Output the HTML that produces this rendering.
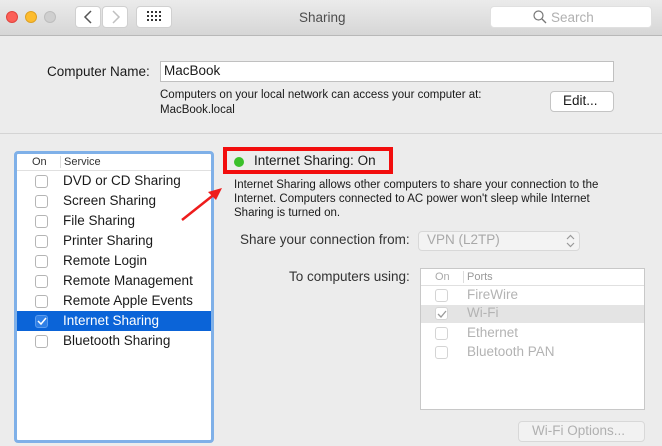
<!DOCTYPE html>
<html><head><style>
*{margin:0;padding:0;box-sizing:border-box}
body{width:662px;height:446px;background:#ececec;font-family:"Liberation Sans",sans-serif;font-size:13.5px;color:#1a1a1a;position:relative;overflow:hidden}
.a{position:absolute;white-space:nowrap}
.tb{left:0;top:0;width:662px;height:36px;background:linear-gradient(#ebebeb,#d6d6d6);border-bottom:1px solid #b8b8b8}
.dot{width:12px;height:12px;border-radius:6px;top:11px}
.btn{background:#fff;border-radius:4px;border:1px solid #d0d0d0}
.cb{width:13px;height:13px;border:1px solid #b5b5b5;border-radius:3px;background:#fff}
.row{left:0;width:194px;height:20px}
.row span{position:absolute;left:46px;top:2px}
.row .cb{position:absolute;left:18px;top:4px}
.g{color:#b3b3b3}
.g .cb{border-color:#d4d4d4}
.s{font-size:11.5px}
</style></head><body>
<div class="a tb"></div>
<div class="a dot" style="left:6px;background:#fc5f57;border:1px solid #e0443e"></div>
<div class="a dot" style="left:25px;background:#fdbc2e;border:1px solid #dea123"></div>
<div class="a dot" style="left:44px;background:#cfcfcf;border:1px solid #bdbdbd"></div>
<div class="a btn" style="left:75px;top:6px;width:26px;height:22px"></div>
<div class="a btn" style="left:102px;top:6px;width:26px;height:22px"></div>
<svg class="a" style="left:75px;top:6px" width="54" height="22"><path d="M16 5 L10 11 L16 17" stroke="#555" stroke-width="1.5" fill="none"/><path d="M38 5 L44 11 L38 17" stroke="#c0c0c0" stroke-width="1.5" fill="none"/></svg>
<div class="a btn" style="left:136px;top:6px;width:36px;height:22px"></div>
<svg class="a" style="left:147px;top:11px" width="14" height="12"><g fill="#333"><rect x="0" y="0" width="2" height="2"/><rect x="4" y="0" width="2" height="2"/><rect x="8" y="0" width="2" height="2"/><rect x="12" y="0" width="2" height="2"/><rect x="0" y="4" width="2" height="2"/><rect x="4" y="4" width="2" height="2"/><rect x="8" y="4" width="2" height="2"/><rect x="12" y="4" width="2" height="2"/><rect x="0" y="8" width="2" height="2"/><rect x="4" y="8" width="2" height="2"/><rect x="8" y="8" width="2" height="2"/><rect x="12" y="8" width="2" height="2"/></g></svg>
<div class="a" style="left:299px;top:10px;color:#4d4d4d">Sharing</div>
<div class="a btn" style="left:490px;top:6px;width:162px;height:22px;border-color:#e0e0e0"></div>
<svg class="a" style="left:533px;top:10px" width="14" height="14"><circle cx="5.5" cy="5.5" r="4.5" stroke="#777" stroke-width="1.2" fill="none"/><path d="M9 9 L13 13" stroke="#777" stroke-width="1.3"/></svg>
<div class="a" style="left:551px;top:10px;color:#b0b0b0">Search</div>

<div class="a" style="left:47px;top:64px">Computer Name:</div>
<div class="a" style="left:160px;top:61px;width:454px;height:21px;background:#fff;border:1px solid #c0c0c0"></div>
<div class="a" style="left:164px;top:63px">MacBook</div>
<div class="a s" style="left:160px;top:88px;line-height:15px">Computers on your local network can access your computer at:<br>MacBook.local</div>
<div class="a btn" style="left:550px;top:91px;width:64px;height:21px;border-color:#c4c4c4"></div>
<div class="a" style="left:563px;top:93px">Edit...</div>
<div class="a" style="left:0;top:133px;width:662px;height:1px;background:#d4d4d4"></div>

<div class="a" style="left:14px;top:151px;width:200px;height:292px;border:3px solid #7fb0e8;border-radius:4px;background:#fff;overflow:hidden">
<div class="a" style="left:0;top:0;width:194px;height:17px;border-bottom:1px solid #e0e0e0;font-size:11px;color:#333"><span class="a" style="left:15px;top:2px">On</span><span class="a" style="left:43px;top:2px;width:1px;height:12px;background:#ddd"></span><span class="a" style="left:47px;top:2px">Service</span></div>
<div class="a row" style="top:17px"><div class="cb"></div><span>DVD or CD Sharing</span></div>
<div class="a row" style="top:37px"><div class="cb"></div><span>Screen Sharing</span></div>
<div class="a row" style="top:57px"><div class="cb"></div><span>File Sharing</span></div>
<div class="a row" style="top:77px"><div class="cb"></div><span>Printer Sharing</span></div>
<div class="a row" style="top:97px"><div class="cb"></div><span>Remote Login</span></div>
<div class="a row" style="top:117px"><div class="cb"></div><span>Remote Management</span></div>
<div class="a row" style="top:137px"><div class="cb"></div><span>Remote Apple Events</span></div>
<div class="a row" style="top:157px;background:#0b64d8;color:#fff"><div class="cb" style="background:#2f7fe6;border-color:#5a9bee"></div><svg class="a" style="left:20px;top:6px" width="10" height="9"><path d="M1 4 L4 7 L9 1" stroke="#fff" stroke-width="1.5" fill="none"/></svg><span>Internet Sharing</span></div>
<div class="a row" style="top:177px"><div class="cb"></div><span>Bluetooth Sharing</span></div>
</div>

<div class="a" style="left:223px;top:147px;width:170px;height:27px;border:4px solid #f20d0d;background:#ececec"></div>
<div class="a" style="left:234px;top:157px;width:10px;height:10px;border-radius:5px;background:#3bc02a"></div>
<div class="a" style="left:254px;top:153px">Internet Sharing: On</div>
<svg class="a" style="left:178px;top:180px" width="50" height="45"><path d="M4 40 L38 13" stroke="#ee1c1c" stroke-width="2.5"/><path d="M44 8 L30 12 L38 20 Z" fill="#ee1c1c"/></svg>
<div class="a s" style="left:234px;top:178px;line-height:14px">Internet Sharing allows other computers to share your connection to the<br>Internet. Computers connected to AC power won't sleep while Internet<br>Sharing is turned on.</div>
<div class="a" style="left:240px;top:232px;color:#333">Share your connection from:</div>
<div class="a" style="left:418px;top:231px;width:162px;height:20px;background:#f3f3f3;border:1px solid #d8d8d8;border-radius:4px"></div>
<div class="a" style="left:427px;top:232px;color:#a8a8a8">VPN (L2TP)</div>
<svg class="a" style="left:566px;top:234px" width="9" height="14"><path d="M1 5 L4.5 1.5 L8 5 M1 9 L4.5 12.5 L8 9" stroke="#999" stroke-width="1.2" fill="none"/></svg>
<div class="a" style="left:289px;top:269px;color:#333">To computers using:</div>
<div class="a" style="left:420px;top:268px;width:225px;height:142px;background:#fff;border:1px solid #c8c8c8"></div>
<div class="a" style="left:421px;top:269px;width:223px;height:17px;border-bottom:1px solid #e0e0e0;font-size:11px;color:#aaa"><span class="a" style="left:14px;top:2px">On</span><span class="a" style="left:42px;top:2px;width:1px;height:12px;background:#ddd"></span><span class="a" style="left:46px;top:2px;color:#999">Ports</span></div>
<div class="a g" style="left:421px;top:286px;width:223px;height:19px"><div class="cb a" style="left:14px;top:3px"></div><span class="a" style="left:46px;top:1px">FireWire</span></div>
<div class="a g" style="left:421px;top:305px;width:223px;height:18px;background:#e4e4e4"><div class="cb a" style="left:14px;top:2px"></div><svg class="a" style="left:16px;top:5px" width="10" height="9"><path d="M1 4 L4 7 L9 1" stroke="#999" stroke-width="1.3" fill="none"/></svg><span class="a" style="left:46px;top:0px">Wi-Fi</span></div>
<div class="a g" style="left:421px;top:324px;width:223px;height:19px"><div class="cb a" style="left:14px;top:3px"></div><span class="a" style="left:46px;top:1px">Ethernet</span></div>
<div class="a g" style="left:421px;top:343px;width:223px;height:19px"><div class="cb a" style="left:14px;top:3px"></div><span class="a" style="left:46px;top:1px">Bluetooth PAN</span></div>
<div class="a" style="left:518px;top:421px;width:127px;height:21px;background:#f2f2f2;border:1px solid #d8d8d8;border-radius:4px"></div>
<div class="a" style="left:532px;top:423px;color:#b0b0b0">Wi-Fi Options...</div>
</body></html>
